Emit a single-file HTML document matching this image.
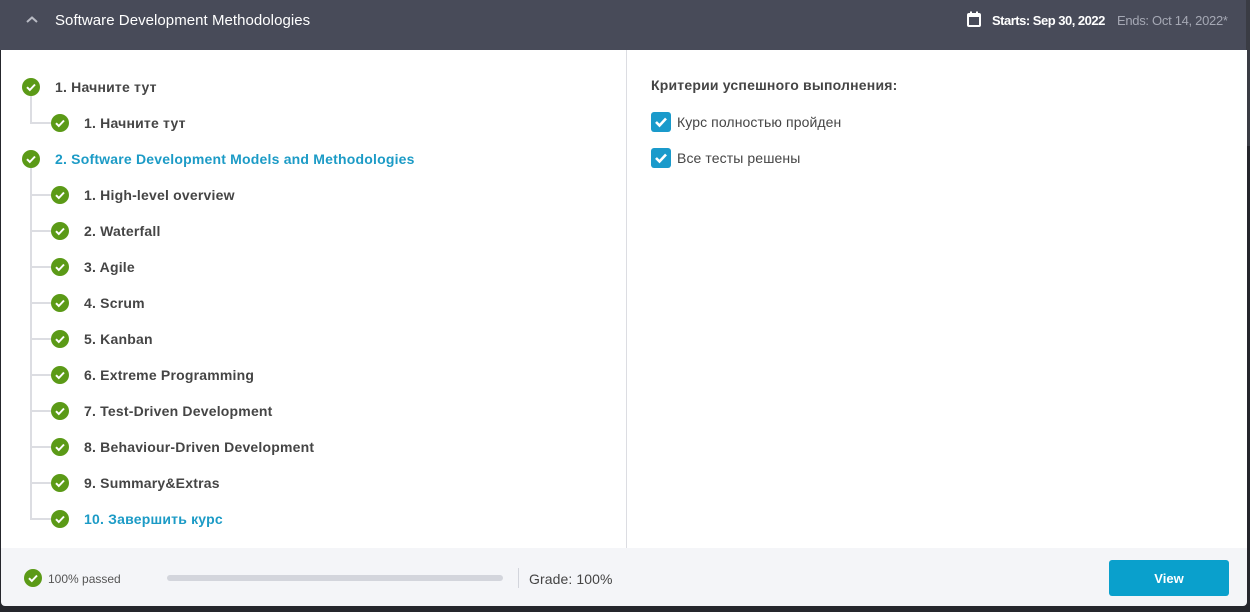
<!DOCTYPE html>
<html><head><meta charset="utf-8"><style>
*{margin:0;padding:0;box-sizing:border-box}
body{width:1250px;height:612px;background:#25262c;font-family:"Liberation Sans","Noto Sans CJK SC",sans-serif;position:relative;overflow:hidden}
.hdr{position:absolute;left:0;top:0;width:1250px;height:50px;background:#484b59}
.card{position:absolute;left:1px;top:50px;width:1246px;height:498px;background:#fff}
.foot{position:absolute;left:1px;top:548px;width:1246px;height:58px;background:#f4f5f8;border-radius:0 0 4px 4px}
.t{position:absolute;white-space:nowrap;font-size:14px;font-weight:bold;color:#454545;letter-spacing:0.2px}
.b{color:#1c9bc6}
.ic{position:absolute;width:18px;height:18px;border-radius:50%;background:#5b9a17}
.ic svg{position:absolute;left:0;top:0}
.vl{position:absolute;width:2px;background:#dcdde2}
.hl{position:absolute;height:2px;background:#dcdde2}
.cb{position:absolute;left:651px;width:20px;height:20px;border-radius:3px;background:#1a9acb}
</style></head><body>
<div class="hdr">
<svg style="position:absolute;left:25px;top:14px" width="14" height="12" viewBox="0 0 14 12"><path d="M2 8 L7 3.5 L12 8" stroke="#b9bbc4" stroke-width="2" fill="none"/></svg>
<div class="t" style="left:55px;top:12px;color:#fff;font-size:15px;font-weight:normal;letter-spacing:0.05px">Software Development Methodologies</div>
<svg style="position:absolute;left:967px;top:11px" width="14" height="17" viewBox="0 0 14 17"><rect x="1" y="3" width="12" height="12" rx="1" fill="none" stroke="#fff" stroke-width="2"/><rect x="1" y="3" width="12" height="3" fill="#fff"/><rect x="3" y="0.5" width="2" height="3" fill="#fff"/><rect x="9" y="0.5" width="2" height="3" fill="#fff"/></svg>
<div class="t" style="left:992px;top:13px;color:#fff;font-size:13px;letter-spacing:-0.5px">Starts: Sep 30, 2022</div>
<div class="t" style="left:1117px;top:13px;color:#a5a8b4;font-size:13px;font-weight:normal;letter-spacing:-0.3px">Ends: Oct 14, 2022*</div>
</div>
<div style="position:absolute;left:1246px;top:0;width:4px;height:146px;background:#3a3c44"></div>
<div class="card"></div>
<div style="position:absolute;left:626px;top:50px;width:1px;height:498px;background:#dcdde2"></div>
<div class="vl" style="left:30px;top:96px;height:28px"></div>
<div class="hl" style="left:30px;top:122px;width:22px"></div>
<div class="vl" style="left:30px;top:168px;height:351px"></div>
<div class="hl" style="left:30px;top:194px;width:22px"></div>
<div class="hl" style="left:30px;top:230px;width:22px"></div>
<div class="hl" style="left:30px;top:266px;width:22px"></div>
<div class="hl" style="left:30px;top:302px;width:22px"></div>
<div class="hl" style="left:30px;top:338px;width:22px"></div>
<div class="hl" style="left:30px;top:374px;width:22px"></div>
<div class="hl" style="left:30px;top:410px;width:22px"></div>
<div class="hl" style="left:30px;top:446px;width:22px"></div>
<div class="hl" style="left:30px;top:482px;width:22px"></div>
<div class="hl" style="left:30px;top:518px;width:22px"></div>
<div id="tree"></div>
<div class="t" style="left:651px;top:77px">Критерии успешного выполнения:</div>
<div class="cb" style="top:112px"><svg width="20" height="20" viewBox="0 0 20 20"><path d="M5 10 L8.5 13.5 L15 6.5" stroke="#fff" stroke-width="2.6" fill="none"/></svg></div>
<div class="t" style="left:677px;top:114px;font-weight:normal;letter-spacing:0.1px">Курс полностью пройден</div>
<div class="cb" style="top:148px"><svg width="20" height="20" viewBox="0 0 20 20"><path d="M5 10 L8.5 13.5 L15 6.5" stroke="#fff" stroke-width="2.6" fill="none"/></svg></div>
<div class="t" style="left:677px;top:150px;font-weight:normal;letter-spacing:0.1px">Все тесты решены</div>
<div class="foot"></div>
<div class="ic" style="left:24px;top:569px"><svg width="18" height="18" viewBox="0 0 18 18"><path d="M5 9.2 L7.8 12 L13 6.5" stroke="#fff" stroke-width="2" fill="none"/></svg></div>
<div class="t" style="left:48px;top:572px;font-size:12px;font-weight:normal;color:#555;letter-spacing:0">100% passed</div>
<div style="position:absolute;left:167px;top:575px;width:336px;height:6px;border-radius:3px;background:#d3d5dc"></div>
<div style="position:absolute;left:518px;top:568px;width:1px;height:20px;background:#d3d5dc"></div>
<div class="t" style="left:529px;top:571px;font-weight:normal;color:#444;letter-spacing:0.1px">Grade: 100%</div>
<div style="position:absolute;left:1109px;top:560px;width:120px;height:36px;border-radius:3px;background:#0aa0cc;color:#fff;font-weight:bold;font-size:13px;text-align:center;line-height:37px">View</div>
<script>
var rows=[[1,"1. Начните тут"],[2,"1. Начните тут"],[1,"2. Software Development Models and Methodologies",1],[2,"1. High-level overview"],[2,"2. Waterfall"],[2,"3. Agile"],[2,"4. Scrum"],[2,"5. Kanban"],[2,"6. Extreme Programming"],[2,"7. Test-Driven Development"],[2,"8. Behaviour-Driven Development"],[2,"9. Summary&Extras"],[2,"10. Завершить курс",1]];
var h="";rows.forEach(function(r,i){var cy=87+36*i;var cx=r[0]==1?31:60;var tx=r[0]==1?55:84;
h+='<div class="ic" style="left:'+(cx-9)+'px;top:'+(cy-9)+'px"><svg width="18" height="18" viewBox="0 0 18 18"><path d="M5 9.2 L7.8 12 L13 6.5" stroke="#fff" stroke-width="2" fill="none"/></svg></div>';
h+='<div class="t'+(r[2]?' b':'')+'" style="left:'+tx+'px;top:'+(cy-8)+'px">'+r[1].replace("&","&amp;")+'</div>';});
document.getElementById("tree").innerHTML=h;
</script>
</body></html>
